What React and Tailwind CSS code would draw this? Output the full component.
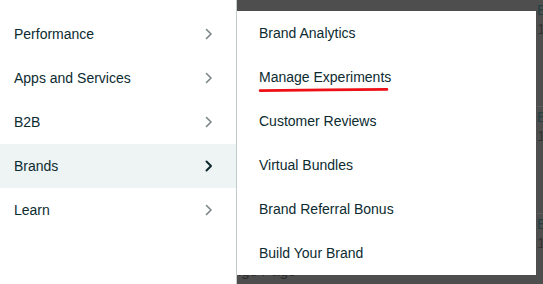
import React from 'react';

const mainItems = ['Performance', 'Apps and Services', 'B2B', 'Brands', 'Learn'];
const brandItems = [
  'Brand Analytics',
  'Manage Experiments',
  'Customer Reviews',
  'Virtual Bundles',
  'Brand Referral Bonus',
  'Build Your Brand',
];

function Chevron({ active }) {
  return (
    <svg width="8" height="12" viewBox="0 0 8 12" className="shrink-0">
      <polyline
        points="1.5,1.5 6,6 1.5,10.5"
        fill="none"
        stroke={active ? '#0f2a2e' : '#7b8687'}
        strokeWidth={active ? 2 : 1.6}
        strokeLinecap="round"
        strokeLinejoin="round"
      />
    </svg>
  );
}

function BackgroundRow() {
  return (
    <div className="h-[107px] border-b border-[#5c5c5c] pt-[1px] text-[15px] leading-[18px]">
      <div className="text-[#233f42]">E</div>
      <div className="text-[#333333] mt-[1px]">1</div>
    </div>
  );
}

export default function App() {
  return (
    <div className="w-[543px] h-[284px] overflow-hidden flex bg-[#4e4e4e] font-['Liberation_Sans',Arial,sans-serif] text-[14px] text-[#0c2b30]">
      {/* left menu */}
      <div className="w-[237px] h-full shrink-0 bg-white border-r border-[#c5cbcb] pt-[12px]">
        {mainItems.map(item => (
          <div
            key={item}
            className={`h-[44px] flex items-center justify-between pl-[14px] pr-[23px] ${item === 'Brands' ? 'bg-[#eef3f3]' : ''}`}
          >
            <span>{item}</span>
            <Chevron active={item === 'Brands'} />
          </div>
        ))}
      </div>

      {/* dimmed page behind */}
      <div className="relative flex-1 h-full overflow-hidden flex">
        <div className="flex-1 min-w-0 flex flex-col justify-end pb-[2px]">
          <div className="text-[15px] text-[#2a2a2a] whitespace-nowrap -ml-[4px]">ngs Page</div>
        </div>
        <div className="w-[6px] shrink-0 overflow-hidden">
          <BackgroundRow />
          <BackgroundRow />
          <BackgroundRow />
        </div>

        {/* submenu */}
        <div className="absolute left-0 top-[11px] w-[299px] h-[262px] bg-white">
          <div className="absolute left-[-6px] top-[148px] w-[12px] h-[12px] bg-white rotate-45 shadow-[-1px_1px_3px_rgba(0,0,0,0.12)]" />
          <div className="relative bg-white">
            {brandItems.map(item => (
              <div key={item} className="relative h-[44px] flex items-center pl-[22px]">
                <span>{item}</span>
                {item === 'Manage Experiments' && (
                  <svg className="absolute left-[21px] top-[73%]" width="132" height="6" viewBox="0 0 132 6">
                    <path d="M2 3.6 C 40 3.2, 90 2.6, 129 2.4" fill="none" stroke="#ee0f16" strokeWidth="2.6" strokeLinecap="round" />
                  </svg>
                )}
              </div>
            ))}
          </div>
        </div>
      </div>
    </div>
  );
}
